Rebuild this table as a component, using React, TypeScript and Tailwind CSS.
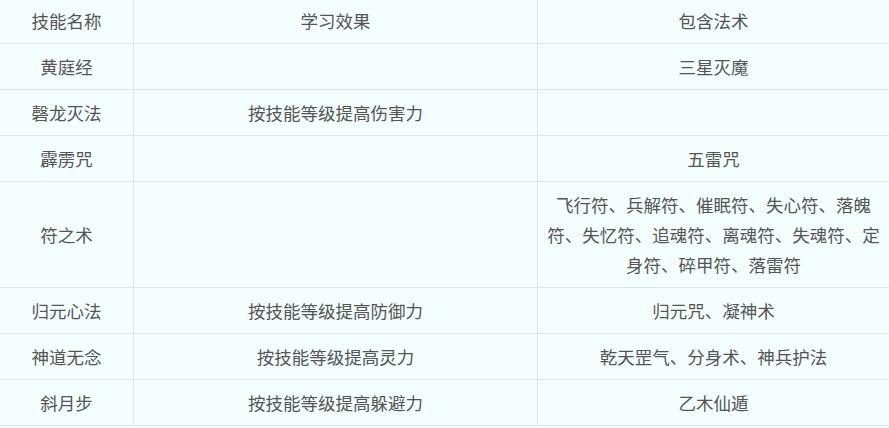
const rows: [string, string, string][] = [
  ['黄庭经', '', '三星灭魔'],
  ['磬龙灭法', '按技能等级提高伤害力', ''],
  ['霹雳咒', '', '五雷咒'],
  ['符之术', '', '飞行符、兵解符、催眠符、失心符、落魄符、失忆符、追魂符、离魂符、失魂符、定身符、碎甲符、落雷符'],
  ['归元心法', '按技能等级提高防御力', '归元咒、凝神术'],
  ['神道无念', '按技能等级提高灵力', '乾天罡气、分身术、神兵护法'],
  ['斜月步', '按技能等级提高躲避力', '乙木仙遁'],
]

function Row({ cells }: { cells: [string, string, string] }) {
  return (
    <div className="flex border-b border-[#dde7e9]">
      <div className="w-[134px] shrink-0 border-r border-[#dde7e9] flex items-center justify-center pt-[8px] pb-[7px] text-center">
        {cells[0]}
      </div>
      <div className="w-[404px] shrink-0 border-r border-[#dde7e9] flex items-center justify-center px-2 pt-[8px] pb-[7px] text-center">
        {cells[1]}
      </div>
      <div className="flex-1 flex items-center justify-center px-2 pt-[8px] pb-[7px] text-center">
        {cells[2]}
      </div>
    </div>
  )
}

export default function App() {
  return (
    <div className="w-[889px] h-[428px] overflow-hidden bg-[#f4fefe]">
      <div
        className="-mt-[2px] text-[17.5px] leading-[30px] text-[#555555]"
        style={{ fontFamily: '"Microsoft YaHei", "Noto Sans CJK SC", sans-serif' }}
      >
        <Row cells={['技能名称', '学习效果', '包含法术']} />
        {rows.map((r) => (
          <Row key={r[0]} cells={r} />
        ))}
      </div>
    </div>
  )
}
